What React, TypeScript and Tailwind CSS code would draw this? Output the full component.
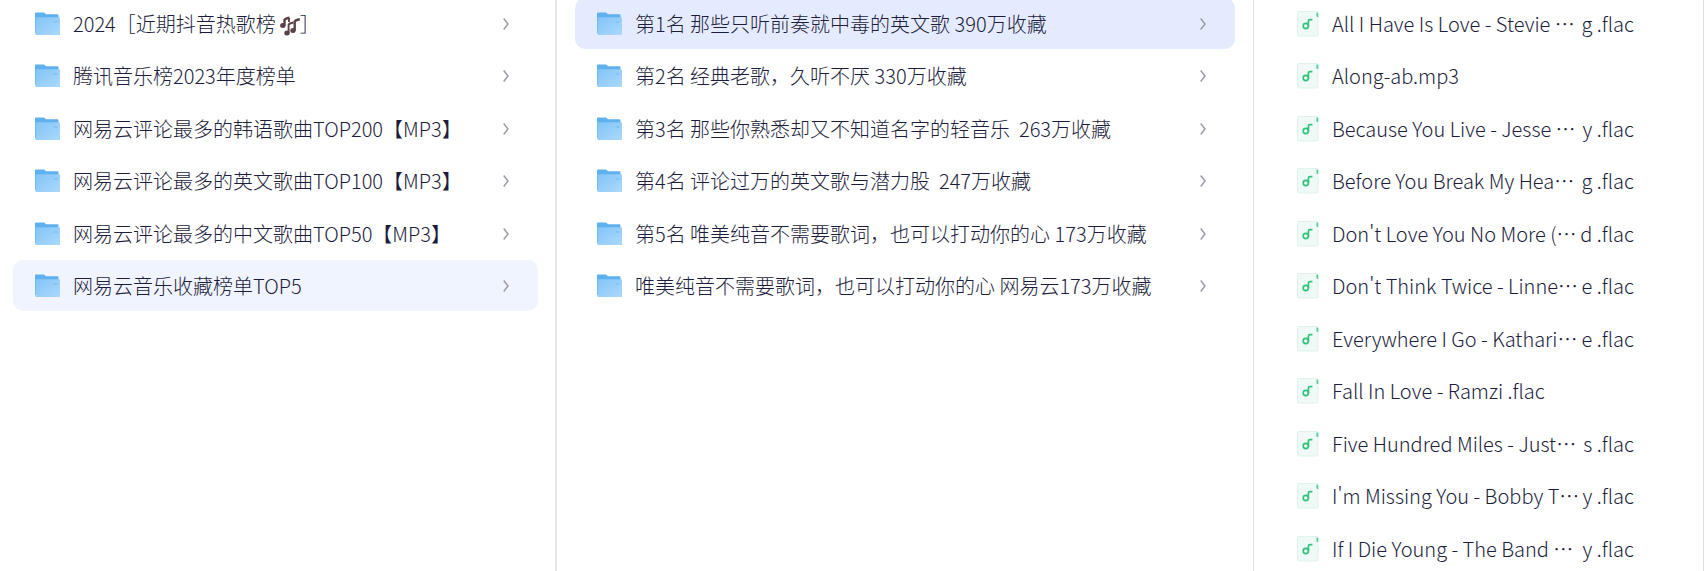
import type { ReactNode } from "react"

type Item = { name: string; tail?: string; active?: boolean; notes?: boolean }

const CHARTS: Item[] = [
  { name: "2024［近期抖音热歌榜", tail: "］", notes: true },
  { name: "腾讯音乐榜2023年度榜单" },
  { name: "网易云评论最多的韩语歌曲TOP200【MP3】" },
  { name: "网易云评论最多的英文歌曲TOP100【MP3】" },
  { name: "网易云评论最多的中文歌曲TOP50【MP3】" },
  { name: "网易云音乐收藏榜单TOP5", active: true },
]

const PLAYLISTS: Item[] = [
  { name: "第1名 那些只听前奏就中毒的英文歌 390万收藏", active: true },
  { name: "第2名 经典老歌，久听不厌 330万收藏" },
  { name: "第3名 那些你熟悉却又不知道名字的轻音乐  263万收藏" },
  { name: "第4名 评论过万的英文歌与潜力股  247万收藏" },
  { name: "第5名 唯美纯音不需要歌词，也可以打动你的心 173万收藏" },
  { name: "唯美纯音不需要歌词，也可以打动你的心 网易云173万收藏" },
]

/* Long names are cut in the middle: start, ellipsis, last letter and extension */
const SONGS: Item[] = [
  { name: "All I Have Is Love - Stevie …", tail: "g .flac" },
  { name: "Along-ab.mp3" },
  { name: "Because You Live - Jesse …", tail: "y .flac" },
  { name: "Before You Break My Hea…", tail: "g .flac" },
  { name: "Don't Love You No More (…", tail: "d .flac" },
  { name: "Don't Think Twice - Linne…", tail: "e .flac" },
  { name: "Everywhere I Go - Kathari…", tail: "e .flac" },
  { name: "Fall In Love - Ramzi .flac" },
  { name: "Five Hundred Miles - Just…", tail: "s .flac" },
  { name: "I'm Missing You - Bobby T…", tail: "y .flac" },
  { name: "If I Die Young - The Band …", tail: "y .flac" },
]

function FolderIcon() {
  return (
    <svg viewBox="0 0 26 26" className="h-[26px] w-[26px] shrink-0" aria-hidden>
      <defs>
        <linearGradient id="folder" x1="0" y1="0" x2="1" y2="1">
          <stop offset="0" stopColor="#82c4f6" />
          <stop offset="1" stopColor="#abd9fd" />
        </linearGradient>
      </defs>
      <path d="M0 2.500a1 1 0 011-1h7.500a1.500 1.500 0 011.200.600L11 3.200H22.500a1 1 0 011 1V22H0z" fill="#5fb0ee" />
      <path d="M0.500 6.200h23.500a1 1 0 011 1v16.800H0.500z" fill="url(#folder)" />
      <path d="M18.500 11h4" stroke="#74b8ee" strokeWidth="1" />
    </svg>
  )
}

function SongIcon() {
  return (
    <svg viewBox="0 0 26 26" className="h-[26px] w-[26px] shrink-0" aria-hidden>
      <rect x="3.500" y="0.500" width="20.500" height="24.500" rx="1" fill="#eff9f5" stroke="#dff3ea" />
      <path d="M22.500 1.500h0.700a1 1 0 011 1V6h-0.700a1 1 0 01-1-1z" fill="#4fce8d" />
      <circle cx="11.800" cy="15" r="2.600" fill="none" stroke="#31c27c" strokeWidth="1.600" />
      <path d="M14.400 15.200V10.200a1.600 1.600 0 011.600-1.600h2.400" fill="none" stroke="#31c27c" strokeWidth="1.700" />
    </svg>
  )
}

function NotesIcon() {
  return (
    <svg viewBox="0 0 20 20" className="ml-1 inline h-5 w-5 align-[-4px]" role="img" aria-label="🎶">
      <g fill="#5b4246">
        <ellipse cx="2.800" cy="9.500" rx="2.700" ry="2.500" />
        <ellipse cx="7" cy="17" rx="2.700" ry="2.500" />
        <ellipse cx="13" cy="14.500" rx="2.700" ry="2.500" />
      </g>
      <g fill="none" stroke="#5b4246">
        <path d="M4.500 9.500V4Q5 2.500 9.500 1.800" strokeWidth="2.400" />
        <path d="M8.600 17V8.500Q10 7 13.500 6.500M9 2v4" strokeWidth="1.900" />
        <path d="M14.700 14.500V5.500Q15.500 3.800 19.800 3.200" strokeWidth="2.400" />
      </g>
    </svg>
  )
}

function Row({ item, icon, chevron, activeClass }: { item: Item; icon: ReactNode; chevron?: boolean; activeClass?: string }) {
  return (
    <li className="min-w-0">
      <button
        type="button"
        aria-current={item.active ? "true" : undefined}
        className={[
          "flex h-[51px] w-full items-center gap-3 rounded-[10px] pl-[22px] pr-[29px] text-left",
          item.active ? activeClass : "",
        ].join(" ")}
      >
        {icon}
        {chevron ? (
          <span className="min-w-0 flex-1 overflow-hidden whitespace-pre">
            {item.name}
            {item.notes && <NotesIcon />}
            {item.tail}
          </span>
        ) : (
          <span className="flex w-[302px] justify-between whitespace-pre">
            <span>{item.name}</span>
            {item.tail && <span>{item.tail}</span>}
          </span>
        )}
        {chevron && (
          <svg viewBox="0 0 6 12" className="h-3 w-1.5 shrink-0" fill="none" stroke="#9b9cab" strokeWidth="1.500" aria-hidden>
            <path d="M0.700 0.500L5 6L0.700 11.500" />
          </svg>
        )}
      </button>
    </li>
  )
}

export default function App() {
  return (
    <main
      lang="zh-CN"
      className="grid min-h-screen grid-cols-[557fr_697fr_450fr] overflow-hidden bg-white font-['Noto_Sans_CJK_SC',sans-serif] text-[20px] font-light leading-7 text-[#1c1d3c]"
    >
      <ul className="-mt-0.5 grid auto-rows-[52px_53px] content-start border-r-2 border-[#e5e5e5] pl-[13px] pr-[17px]">
        {CHARTS.map((item) => (
          <Row key={item.name} item={item} icon={<FolderIcon />} chevron activeClass="bg-[#f0f4ff]" />
        ))}
      </ul>
      <ul className="-mt-0.5 grid auto-rows-[52px_53px] content-start border-r border-[#e0e0e0] px-[18px]">
        {PLAYLISTS.map((item) => (
          <Row key={item.name} item={item} icon={<FolderIcon />} chevron activeClass="bg-[#e5ebff]" />
        ))}
      </ul>
      <ul className="-mt-0.5 grid auto-rows-[52px_53px] content-start border-r border-[#e0e0e0] px-[18px]">
        {SONGS.map((item) => (
          <Row key={item.name} item={item} icon={<SongIcon />} />
        ))}
      </ul>
    </main>
  )
}
